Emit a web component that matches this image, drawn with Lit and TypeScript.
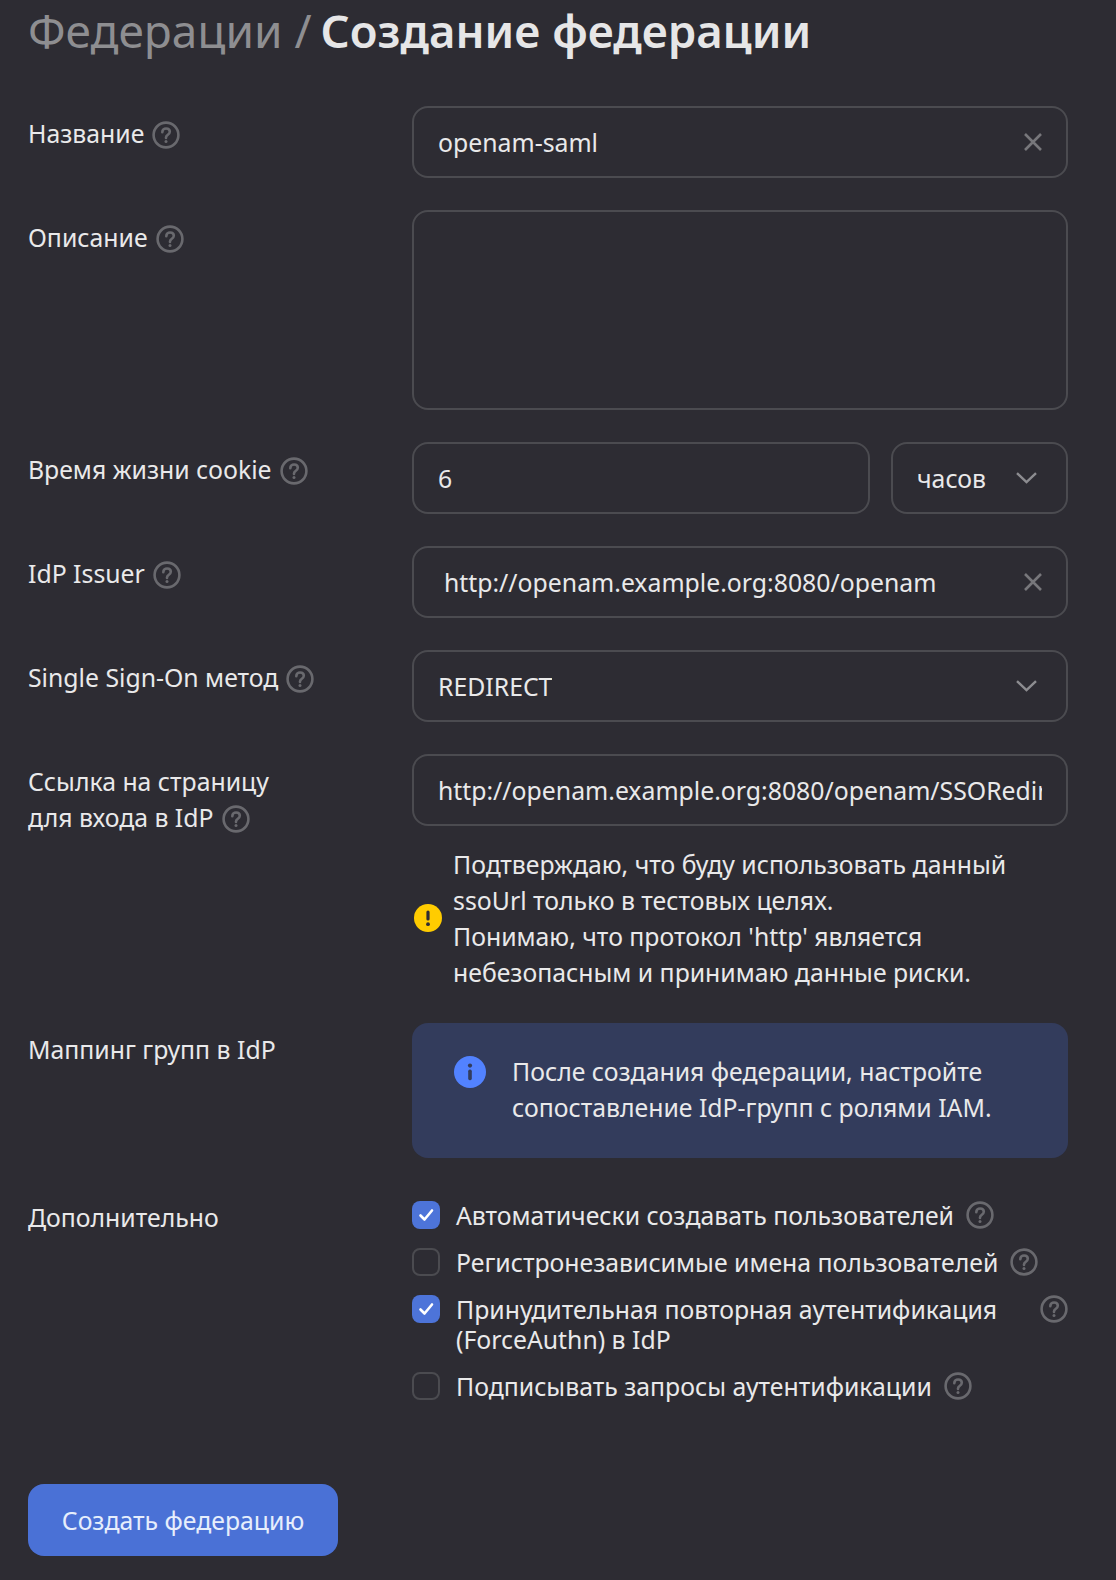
import { css, html, LitElement, nothing } from "lit";
import { customElement } from "lit/decorators.js";

const help = html`<svg class="help" viewBox="0 0 28 28" fill="none" stroke="#69696e" stroke-width="2.6">
    <circle cx="14" cy="14" r="12.4"></circle>
    <path d="M10.3 11.2c0-2.2 1.6-3.7 3.8-3.7s3.7 1.4 3.7 3.3c0 2.9-3.8 2.9-3.8 5.6v.6" stroke-linecap="round"></path>
    <circle cx="14" cy="20.6" r="1.5" fill="#69696e" stroke="none"></circle>
</svg>`;

const chevron = html`<svg class="chevron" viewBox="0 0 21 12" fill="none" stroke="#8c8c90" stroke-width="2.4">
    <path d="M1 1.2l9.5 9 9.5-9"></path>
</svg>`;

const cross = html`<svg class="cross" viewBox="0 0 18 18" fill="none" stroke="#77777b" stroke-width="2.6">
    <path d="M1 1l16 16M17 1L1 17"></path>
</svg>`;

const tick = html`<svg viewBox="0 0 28 28" fill="none" stroke="#fff" stroke-width="2.6">
    <path d="M8.5 14.5l4 4 7.5-9" stroke-linecap="round" stroke-linejoin="round"></path>
</svg>`;

const options = [
    { text: "Автоматически создавать пользователей", checked: true },
    { text: "Регистронезависимые имена пользователей", checked: false },
    { text: "Принудительная повторная аутентификация (ForceAuthn) в IdP", checked: true, wide: true },
    { text: "Подписывать запросы аутентификации", checked: false },
];

@customElement("app-root")
export class AppRoot extends LitElement {
    private label(text: unknown) {
        return html`<div class="label">${text}${help}</div>`;
    }

    render() {
        return html`
    <h1><span class="crumb">Федерации /</span> Создание федерации</h1>
    <div class="row">
        ${this.label("Название")}
        <div class="field"><span class="value">openam-saml</span>${cross}</div>
    </div>
    <div class="row">
        ${this.label("Описание")}
        <div class="field area"></div>
    </div>
    <div class="row">
        ${this.label("Время жизни cookie")}
        <div class="pair">
            <div class="field grow"><span class="value">6</span></div>
            <div class="field unit"><span class="value">часов</span>${chevron}</div>
        </div>
    </div>
    <div class="row">
        ${this.label("IdP Issuer")}
        <div class="field"><span class="value issuer">http://openam.example.org:8080/openam</span>${cross}</div>
    </div>
    <div class="row">
        ${this.label("Single Sign-On метод")}
        <div class="field"><span class="value">REDIRECT</span>${chevron}</div>
    </div>
    <div class="row tight">
        ${this.label(html`Ссылка на страницу<br />для входа в IdP`)}
        <div>
            <div class="field"><span class="value">http://openam.example.org:8080/openam/SSORedirect/metaAlias</span></div>
            <div class="warning">
                <svg viewBox="0 0 28 28">
                    <circle cx="14" cy="14" r="14" fill="#ffcc00"></circle>
                    <rect x="12.4" y="6.5" width="3.2" height="10" rx="1.6" fill="#2d2c33"></rect>
                    <circle cx="14" cy="20.2" r="1.9" fill="#2d2c33"></circle>
                </svg>
                <div>Подтверждаю, что буду использовать данный<br />ssoUrl только в тестовых целях.<br />Понимаю, что протокол 'http' является<br />небезопасным и принимаю данные риски.</div>
            </div>
        </div>
    </div>
    <div class="row mapping">
        <div class="label plain">Маппинг групп в IdP</div>
        <div class="note">
            <svg viewBox="0 0 32 32">
                <circle cx="16" cy="16" r="16" fill="#5282ff"></circle>
                <circle cx="16" cy="9.6" r="2.1" fill="#333c5c"></circle>
                <rect x="14.2" y="13.6" width="3.6" height="10.6" rx="1.6" fill="#333c5c"></rect>
            </svg>
            <div>После создания федерации, настройте<br />сопоставление IdP-групп с ролями IAM.</div>
        </div>
    </div>
    <div class="row">
        <div class="label plain extra">Дополнительно</div>
        <div class="options">
            ${options.map((o) => html`
            <div class="option">
                <span class="box ${o.checked ? "on" : ""}">${o.checked ? tick : nothing}</span>
                <span class="option-text ${o.wide ? "wide" : ""}">${o.text}</span>
                ${help}
            </div>`)}
        </div>
    </div>
    <button>Создать федерацию</button>
        `;
    }

    static styles = css`
        :host {
            display: block;
            box-sizing: border-box;
            height: 1580px;
            padding: 0 48px 0 28px;
            background: #2d2c33;
            color: #e9e9ea;
            font-family: "Noto Sans", "Open Sans", sans-serif;
            font-size: 24.8px;
            overflow: hidden;
        }
        h1 {
            margin: 0;
            height: 106px;
            font-size: 45.5px;
            line-height: 60px;
            font-weight: 600;
            color: #e6e6e7;
            white-space: nowrap;
        }
        .crumb {
            font-size: 46px;
            font-weight: 400;
            color: #8e8e91;
            margin-right: -3px;
        }
        .row {
            display: grid;
            grid-template-columns: 384px 656px;
            margin-bottom: 32px;
        }
        .row.tight {
            margin-bottom: 33px;
        }
        .row.mapping {
            margin-bottom: 39px;
        }
        .label {
            padding-top: 9px;
            line-height: 36px;
        }
        .label.plain {
            padding-top: 8px;
        }
        .label.extra {
            padding-top: 2px;
        }
        .help {
            width: 28px;
            height: 28px;
            margin-left: 8px;
            vertical-align: -6px;
            flex: none;
        }
        .field {
            box-sizing: border-box;
            height: 72px;
            display: flex;
            align-items: center;
            justify-content: space-between;
            gap: 16px;
            padding: 0 24px;
            border: 2px solid #4b4b50;
            border-radius: 16px;
            overflow: hidden;
        }
        .field.area {
            height: 200px;
        }
        .pair {
            display: flex;
            gap: 21px;
        }
        .grow {
            flex: 1;
        }
        .unit {
            width: 177px;
            flex: none;
        }
        .value {
            white-space: nowrap;
            overflow: hidden;
            min-width: 0;
        }
        .issuer {
            padding-left: 6px;
        }
        .cross {
            width: 18px;
            height: 18px;
            flex: none;
        }
        .chevron {
            width: 21px;
            height: 12px;
            flex: none;
            margin-right: 5px;
        }
        .warning {
            display: flex;
            align-items: center;
            gap: 11px;
            margin-top: 20px;
            line-height: 36px;
            white-space: nowrap;
        }
        .warning svg {
            width: 28px;
            height: 28px;
            flex: none;
            margin-left: 2px;
        }
        .note {
            box-sizing: border-box;
            height: 135px;
            display: flex;
            gap: 26px;
            padding: 30px 42px;
            border-radius: 16px;
            background: #333c5c;
            line-height: 36px;
            white-space: nowrap;
        }
        .note svg {
            width: 32px;
            height: 32px;
            flex: none;
            margin-top: 3px;
        }
        .options {
            display: flex;
            flex-direction: column;
            gap: 11px;
        }
        .option {
            display: flex;
            align-items: flex-start;
            line-height: 36px;
        }
        .box {
            box-sizing: border-box;
            width: 28px;
            height: 28px;
            margin: 4px 16px 0 0;
            border: 2px solid #4b4b50;
            border-radius: 8px;
            flex: none;
        }
        .box.on {
            border: none;
            background: #4d74d9;
        }
        .box svg {
            display: block;
        }
        .option-text.wide {
            width: 594px;
            padding: 3px 0;
            line-height: 30px;
        }
        .option .help {
            margin: 4px 0 0 12px;
        }
        button {
            display: block;
            width: 310px;
            height: 72px;
            margin-top: 80px;
            border: none;
            border-radius: 16px;
            background: #4a71d6;
            color: #e6eefc;
            font: inherit;
        }
    `;
}
